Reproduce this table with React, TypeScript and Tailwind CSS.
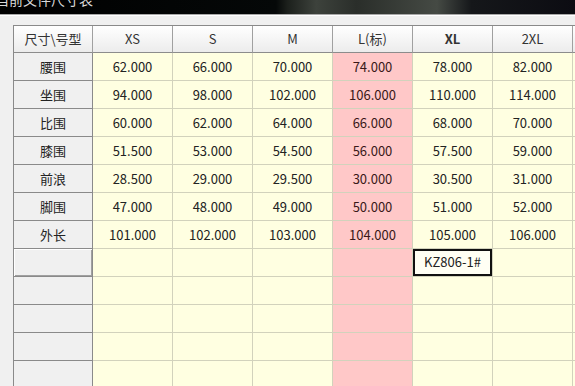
import React from "react";

const cols = ["XS", "S", "M", "L(标)", "XL", "2XL", ""];
const rows: [string, string[]][] = [
  ["腰围", ["62.000", "66.000", "70.000", "74.000", "78.000", "82.000", ""]],
  ["坐围", ["94.000", "98.000", "102.000", "106.000", "110.000", "114.000", ""]],
  ["比围", ["60.000", "62.000", "64.000", "66.000", "68.000", "70.000", ""]],
  ["膝围", ["51.500", "53.000", "54.500", "56.000", "57.500", "59.000", ""]],
  ["前浪", ["28.500", "29.000", "29.500", "30.000", "30.500", "31.000", ""]],
  ["脚围", ["47.000", "48.000", "49.000", "50.000", "51.000", "52.000", ""]],
  ["外长", ["101.000", "102.000", "103.000", "104.000", "105.000", "106.000", ""]],
];

export default function App() {
  const font = { fontFamily: '"Microsoft YaHei", "Noto Sans CJK SC", "Liberation Sans", sans-serif' };
  const empty = Array.from({ length: 5 });
  return (
    <div className="w-[575px] h-[386px] overflow-hidden bg-[#f0f0f0] text-[13px] text-[#222]" style={font}>
      <div className="h-[14px] relative overflow-hidden bg-[linear-gradient(90deg,#000_0%,#050808_48%,#1c201c_50%,#3d423c_55%,#2a2e2a_62%,#454a44_76%,#15171a_82%,#0c0c12_100%)]">
        <span className="absolute left-[-5px] top-[-9px] text-[14px] leading-[16px] text-[#d8d8d8] whitespace-nowrap">当前文件尺寸表</span>
      </div>
      <div className="h-px bg-[#a8a8a8]" />
      <div className="h-px bg-white" />
      <div className="pt-[9px] pl-[13px]">
        <div className="grid grid-cols-[79px_repeat(7,80px)] w-max border-l border-t border-[#8a8a8a]">
          <div className="h-[27px] flex items-center justify-center border-r border-b border-[#a0a0a0] border-b-[#8c8c8c] bg-[linear-gradient(#ffffff,#ececec)] text-[#333]">尺寸\号型</div>
          {cols.map((c, i) => (
            <div
              key={i}
              className={`h-[27px] flex items-center justify-center border-r border-b border-[#a0a0a0] border-b-[#8c8c8c] bg-[linear-gradient(#ffffff,#ececec)] text-[#333] ${c === "XL" ? "font-bold text-[#111]" : ""}`}
            >
              {c}
            </div>
          ))}
          {rows.map(([label, vals]) => (
            <React.Fragment key={label}>
              <div className="h-[28px] flex items-center justify-center border-r border-b border-[#8a8a8a] bg-[#f0f0f0] text-[#222]">{label}</div>
              {vals.map((v, i) => (
                <div
                  key={i}
                  className={`h-[28px] flex items-center justify-center border-r border-b border-[#d2d2bc] ${i === 3 ? "bg-[#ffc8c8] text-[#3a1818]" : "bg-[#ffffe1] text-[#222]"}`}
                >
                  {v}
                </div>
              ))}
            </React.Fragment>
          ))}
          {empty.map((_, r) => (
            <React.Fragment key={r}>
              <div
                className={`h-[28px] border-r border-b border-[#8a8a8a] bg-[#f0f0f0] ${r === 0 ? "shadow-[inset_1px_1px_0_#ffffff,inset_-1px_-1px_0_#a0a0a0]" : ""}`}
              />
              {cols.map((_, i) => (
                <div
                  key={i}
                  className={`h-[28px] flex items-center justify-center border-r border-b border-[#d2d2bc] ${i === 3 ? "bg-[#ffc8c8]" : "bg-[#ffffe1]"}`}
                >
                  {r === 0 && i === 4 ? (
                    <div className="w-full h-full flex items-center justify-center border-2 border-[#111] bg-[#fffff4] text-[#222] -mt-px">KZ806-1#</div>
                  ) : null}
                </div>
              ))}
            </React.Fragment>
          ))}
        </div>
      </div>
    </div>
  );
}
